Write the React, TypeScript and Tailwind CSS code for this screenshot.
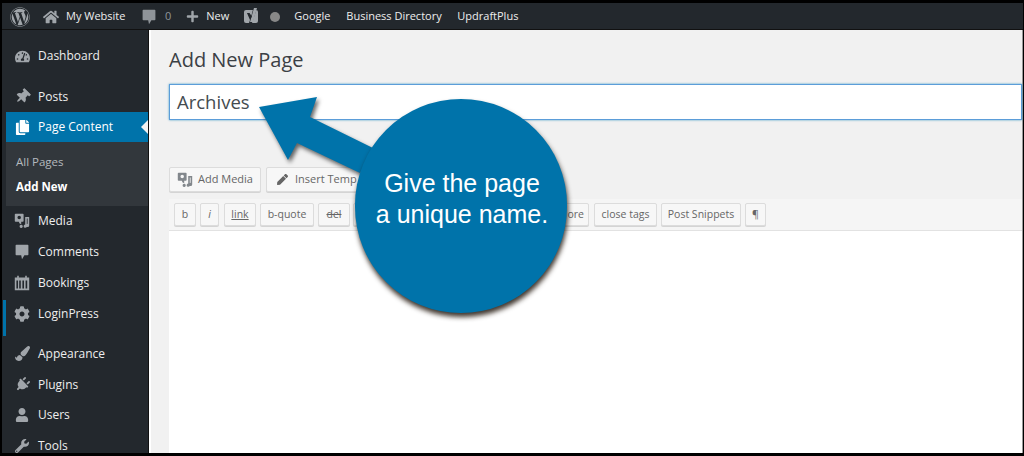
import React from "react";
import { FaWordpress, FaHome, FaPlus, FaThumbtack, FaCopy, FaCog, FaPaintBrush, FaPlug, FaUser, FaWrench, FaTachometerAlt, FaPen } from "react-icons/fa";

const Speech = ({ size = 16 }: { size?: number }) => (
  <svg width={size} height={size} viewBox="0 0 20 20" fill="currentColor"><path d="M3 1h14a1 1 0 0 1 1 1v11a1 1 0 0 1-1 1h-4l-3 5-1-5H3a1 1 0 0 1-1-1V2a1 1 0 0 1 1-1z" /></svg>
);
const MediaIcon = ({ size = 16 }: { size?: number }) => (
  <svg width={size} height={size} viewBox="0 0 20 20" fill="currentColor"><path d="M2 1h9a1 1 0 0 1 1 1v8a1 1 0 0 1-1 1H9v3l-2-1-1-2H2a1 1 0 0 1-1-1V2a1 1 0 0 1 1-1zm4.500 2.500a2.200 2.200 0 1 0 0 4.400 2.200 2.200 0 0 0 0-4.400zM14 5h5v10.500a2 2 0 1 1-2-2V7h-1v9.500a2 2 0 1 1-2-2zM8 15a2 2 0 1 1 0 3.500A2 2 0 0 1 8 15z" /></svg>
);
const Calendar = ({ size = 16 }: { size?: number }) => (
  <svg width={size} height={size} viewBox="0 0 20 20" fill="currentColor"><path d="M4 1h2v2h8V1h2v2h3v16H1V3h3zM3 7v10h2V7zm3.500 0v10h2V7zm4 0v10h2V7zm4 0v10h2V7z" /></svg>
);
const YoastBox = () => (
  <svg width={16} height={17} viewBox="0 0 16 17" className="ml-[14px]">
    <rect x="0" y="2" width="14" height="13" rx="2" fill="#a0a5aa" />
    <path d="M3 5h2.500L7 9l2-7.500h3.500L8 15H5l1-3z" fill="#23282d" />
    <path d="M10 0h3l-4 14H6z" fill="#a0a5aa" />
    <path d="M8 8 5 5H3.500l3 6.500z" fill="#23282d" />
  </svg>
);

type Item = { label: string; icon: React.ReactNode; h: string; active?: boolean; strip?: boolean };

const items: Item[] = [
  { label: "Dashboard", icon: <FaTachometerAlt size={15} />, h: "h-[40px] mb-[5px]" },
  { label: "Posts", icon: <FaThumbtack size={15} className="rotate-45" />, h: "h-[31px]" },
  { label: "Page Content", icon: <FaCopy size={15} />, h: "h-[30px]", active: true },
];
const items2: Item[] = [
  { label: "Media", icon: <MediaIcon />, h: "h-[30px]" },
  { label: "Comments", icon: <Speech />, h: "h-[31px]" },
  { label: "Bookings", icon: <Calendar />, h: "h-[31px]" },
  { label: "LoginPress", icon: <FaCog size={16} />, h: "h-[31px] mb-[9px]", strip: true },
  { label: "Appearance", icon: <FaPaintBrush size={15} />, h: "h-[31px]" },
  { label: "Plugins", icon: <FaPlug size={15} className="rotate-45" />, h: "h-[31px]" },
  { label: "Users", icon: <FaUser size={14} />, h: "h-[30px]" },
  { label: "Tools", icon: <FaWrench size={14} />, h: "h-[31px]" },
];

function Row({ label, icon, h, active, strip }: Item) {
  return (
    <div className={`${h} shrink-0 relative flex items-center pl-[7px] gap-[7px] text-[12px] ${active ? "bg-[#0073aa] text-white" : "text-[#eeeeee]"}`}>
      <span className={`w-[18px] flex justify-center ${active ? "text-white" : "text-[#a0a5aa]"}`}>{icon}</span>
      <span>{label}</span>
      {active && <span className="absolute right-0 top-[8px] w-0 h-0 border-y-[7px] border-y-transparent border-r-[7px] border-r-[#f1f1f1]" />}
      {strip && <span className="absolute left-[-3px] top-[2px] w-[3px] h-[36px] bg-[#0073aa]" />}
    </div>
  );
}

const Btn = ({ children, className = "" }: { children?: React.ReactNode; className?: string }) => (
  <div className={`h-[23px] flex items-center justify-center shrink-0 whitespace-nowrap border border-[#dcdcdc] bg-[#f7f7f7] rounded-[2px] text-[10.5px] text-[#666] shadow-[0_1px_0_#d4d4d4] ${className}`}>{children}</div>
);

export default function App() {
  return (
    <div className="relative w-[1024px] h-[456px] overflow-hidden bg-black pt-[3px] pr-[1px] pb-[3px] pl-[2px] flex flex-col font-['Open_Sans',sans-serif]">
      <header className="h-[27px] shrink-0 bg-[#23282d] border-b border-[#111] flex items-center pl-[8px] pt-[1px] text-[#eeeeee] text-[11px]">
        <FaWordpress size={20} className="text-[#a0a5aa]" />
        <FaHome size={16} className="ml-[13px] text-[#a0a5aa]" />
        <span className="ml-[7px] w-[61px] whitespace-nowrap">My Website</span>
        <span className="ml-[14px] text-[#8f9499]"><Speech size={16} /></span>
        <span className="ml-[8px] text-[#8f9499]">0</span>
        <FaPlus size={13} className="ml-[15px] text-[#a0a5aa]" />
        <span className="ml-[7px] w-[24px]">New</span>
        <YoastBox />
        <span className="ml-[10px] w-[10px] h-[10px] rounded-full bg-[#888]" />
        <span className="ml-[14px] w-[37px]">Google</span>
        <span className="ml-[15px] w-[94px] whitespace-nowrap">Business Directory</span>
        <span className="ml-[17px]">UpdraftPlus</span>
      </header>
      <div className="flex flex-1 min-h-0">
        <aside className="w-[147px] shrink-0 bg-[#23282d] pl-[4px] pt-[6px] flex flex-col overflow-hidden border-r border-[#111]">
          {items.map((i) => <Row key={i.label} {...i} />)}
          <div className="h-[64px] shrink-0 bg-[#32373c] pt-[7px] pl-[10px] text-[11.5px] flex flex-col">
            <span className="h-[25px] flex items-center text-[#b4b9be]">All Pages</span>
            <span className="h-[25px] flex items-center font-bold text-white">Add New</span>
          </div>
          {items2.map((i) => <Row key={i.label} {...i} />)}
        </aside>
        <main className="flex-1 min-w-0 bg-[#f1f1f1] border-l-2 border-r border-l-white border-r-[#999] pl-[18px] flex flex-col">
          <h1 className="h-[54px] shrink-0 flex items-center text-[20px] text-[#3b4045] font-normal pt-[6px]">Add New Page</h1>
          <div className="h-[36px] shrink-0 bg-white border border-[#5b9dd9] shadow-[0_0_2px_rgba(30,140,190,0.8)] flex items-center pl-[7px] text-[18.5px] text-[#444b50]">Archives</div>
          <div className="mt-[47px] h-[25px] shrink-0 flex gap-[5px]">
            <Btn className="h-[25px] w-[92px] gap-[5px] text-[11px]"><span className="text-[#82878c]"><MediaIcon size={16} /></span>Add Media</Btn>
            <Btn className="h-[25px] pl-[10px] gap-[7px] text-[11px] w-[150px] justify-start overflow-hidden"><FaPen size={11} className="text-[#666]" />Insert Temp</Btn>
          </div>
          <div className="mt-[7px] h-[32px] shrink-0 bg-[#f5f5f5] border-b border-[#e2e2e2] pl-[5px] flex items-center">
            <Btn className="w-[22px]">b</Btn>
            <Btn className="w-[19px] ml-[4px] italic">i</Btn>
            <Btn className="w-[32px] ml-[5px] underline">link</Btn>
            <Btn className="w-[54px] ml-[4px]">b-quote</Btn>
            <Btn className="w-[32px] ml-[4px] line-through">del</Btn>
            <Btn className="w-[201px] ml-[3px]" />
            <Btn className="w-[33px] ml-[2px] pr-[4px] justify-end">ore</Btn>
            <Btn className="w-[63px] ml-[5px]">close tags</Btn>
            <Btn className="w-[80px] ml-[4px]">Post Snippets</Btn>
            <Btn className="w-[21px] ml-[4px]">¶</Btn>
          </div>
          <div className="flex-1 bg-white" />
        </main>
      </div>

      <svg className="absolute left-[250px] top-[90px] drop-shadow-[2px_3px_2px_rgba(0,0,0,0.6)]" width="130" height="90" viewBox="250 90 130 90" aria-hidden="true">
        <polygon points="259,107 317,97 310,117 375,149 360,173 297,143 288,160" fill="#0073aa" />
      </svg>
      <div className="absolute left-[355px] top-[99px] w-[212px] h-[214px] rounded-full bg-[#0073aa] shadow-[1px_4px_5px_rgba(30,20,10,0.85)] flex flex-col items-center pt-[69px] pl-[2px] text-white text-[25px] leading-[31px] whitespace-nowrap font-['Liberation_Sans',sans-serif]">
        <span>Give the page</span>
        <span>a unique name.</span>
      </div>
    </div>
  );
}
